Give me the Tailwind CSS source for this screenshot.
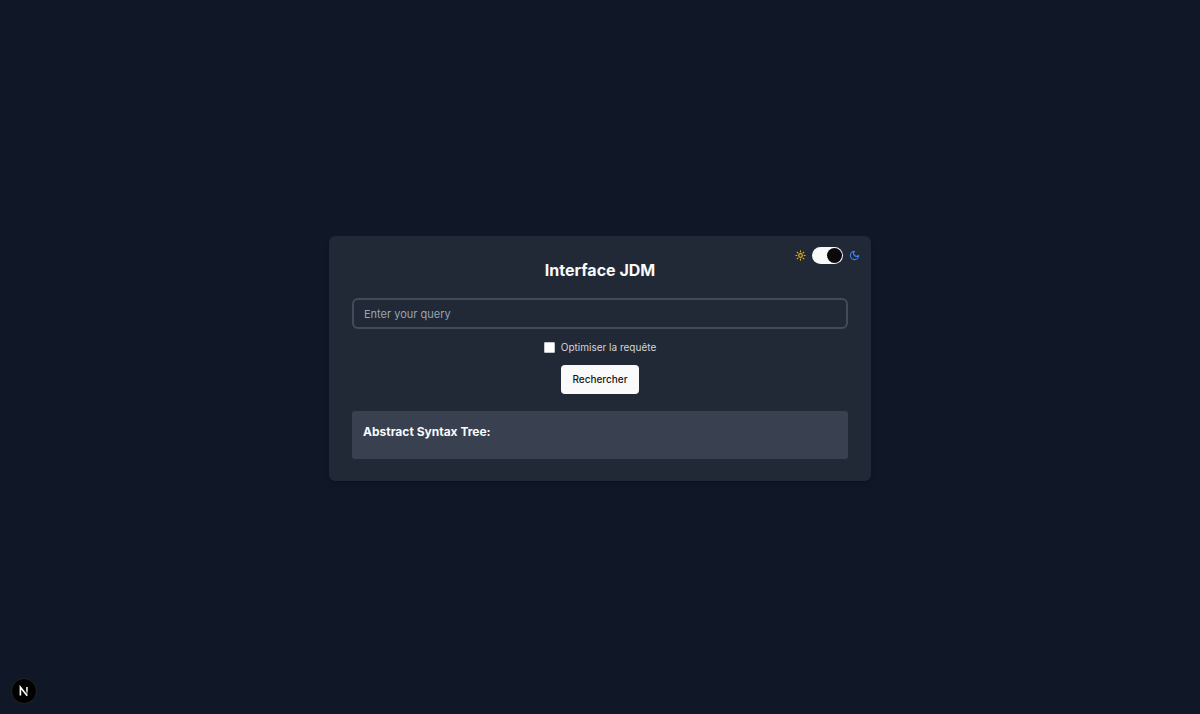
<!DOCTYPE html>
<html lang="fr">
<head>
  <meta charset="UTF-8">
  <meta name="viewport" content="width=device-width, initial-scale=1">
  <title>Interface JDM</title>
  <!-- Tailwind CSS CDN -->
  <script src="https://cdn.jsdelivr.net/npm/@tailwindcss/browser@4"></script>
</head>
<body class="bg-[#101726] font-['Inter',sans-serif]">
  <main class="flex min-h-screen flex-col items-center justify-center pt-[3px]">
    <!-- Search card -->
    <div class="relative w-full max-w-[542px] rounded-md bg-[#212936] px-[23px] pt-[23px] pb-[22px] shadow-md">
      <!-- Theme switch -->
      <div class="absolute top-[11px] right-[11px] flex items-center gap-[6px]">
        <svg class="size-[11px] text-[#eab308]" viewBox="0 0 24 24" fill="none" stroke="currentColor" stroke-width="2.5" stroke-linecap="round" stroke-linejoin="round" aria-hidden="true">
          <circle cx="12" cy="12" r="4"/>
          <path d="M12 2v2M12 20v2M4.93 4.93l1.41 1.41M17.66 17.66l1.41 1.41M2 12h2M20 12h2M6.34 17.66l-1.41 1.41M19.07 4.93l-1.41 1.41"/>
        </svg>
        <button type="button" id="themeSwitch" role="switch" aria-checked="true" aria-label="Dark mode" class="flex h-[17px] w-[31px] items-center justify-end rounded-full bg-[#fafafa] px-px">
          <span class="size-[15px] rounded-full bg-[#0a0a0a]"></span>
        </button>
        <svg class="size-[11px] text-[#3b82f6]" viewBox="0 0 24 24" fill="none" stroke="currentColor" stroke-width="2.5" stroke-linecap="round" stroke-linejoin="round" aria-hidden="true">
          <path d="M12 3a6 6 0 0 0 9 9 9 9 0 1 1-9-9Z"/>
        </svg>
      </div>

      <h1 class="mb-[17px] text-center text-[16px] leading-[22px] font-bold text-[#f8fafc]">Interface JDM</h1>

      <!-- Query form -->
      <form id="queryForm" class="flex flex-col items-center gap-3">
        <input type="text" id="query" name="query" aria-label="Query" placeholder="Enter your query" class="h-[31px] w-full rounded-md border-2 border-[#414b59] px-[10px] text-[11px] text-white placeholder:text-[#9ca3af] focus:outline-none">
        <div class="flex h-3 items-center gap-[6px]">
          <input type="checkbox" id="optimize" name="optimize" class="size-[11px] appearance-none rounded-[1px] border border-[#c4c7cb] bg-white checked:bg-blue-500">
          <label for="optimize" class="text-[10px] leading-3 text-[#d1d5db]">Optimiser la requête</label>
        </div>
        <button type="submit" class="h-[29px] rounded-[4px] bg-[#fafafa] px-[11px] text-[10px] font-medium text-[#171717]">Rechercher</button>
      </form>

      <!-- Syntax tree result -->
      <section class="mt-[17px] min-h-12 rounded-[3px] bg-[#394150] px-[11px] pt-[11px]">
        <h2 class="text-[12px] leading-5 font-bold text-[#f8fafc]">Abstract Syntax Tree:</h2>
      </section>
    </div>
  </main>

  <!-- Dev tools badge -->
  <button type="button" aria-label="Open dev tools" class="fixed bottom-[10px] left-[11px] flex size-[26px] items-center justify-center rounded-full border border-[#242424] bg-black">
    <svg class="size-[12px]" viewBox="0 0 12 12" fill="none" aria-hidden="true">
      <defs>
        <linearGradient id="stem" x1="0" y1="2" x2="0" y2="10" gradientUnits="userSpaceOnUse">
          <stop offset="0.4" stop-color="#fff"/>
          <stop offset="1" stop-color="#fff" stop-opacity="0.1"/>
        </linearGradient>
      </defs>
      <path d="M2.4 10.4V2.2L9.2 10.8" stroke="#fff" stroke-width="1.6"/>
      <rect x="8.2" y="2" width="1.5" height="8" fill="url(#stem)"/>
    </svg>
  </button>
</body>
</html>
